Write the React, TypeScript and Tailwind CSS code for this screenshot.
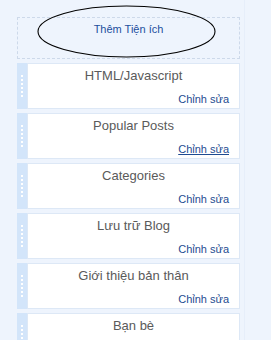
import React from "react";

const items = [
  { title: "HTML/Javascript", hover: false },
  { title: "Popular Posts", hover: true },
  { title: "Categories", hover: false },
  { title: "Lưu trữ Blog", hover: false },
  { title: "Giới thiệu bản thân", hover: false },
  { title: "Bạn bè", hover: false },
];

function Handle() {
  return (
    <div className="w-[10px] shrink-0 bg-[#d3e5fa] flex flex-col items-center justify-center gap-[2px]">
      {[0, 1, 2, 3, 4, 5].map((i) => (
        <div key={i} className="w-[2px] h-[2px] bg-white" />
      ))}
    </div>
  );
}

export default function App() {
  return (
    <div
      className="w-[271px] h-[340px] overflow-hidden bg-[#eef4fd] relative"
      style={{ fontFamily: '"Liberation Sans", Arial, sans-serif' }}
    >
      <div className="w-[245px] h-full border-r border-[#e6eefa] pl-[17px] pt-[17px]">
        <div className="w-[223px] h-[42px] border border-dashed border-[#cdd9ea] flex items-start justify-center pt-[5px]">
          <span className="text-[11px] leading-[13px] text-[#1d4f9d]">Thêm Tiện ích</span>
        </div>
        <div className="flex flex-col gap-[4px] mt-[4px]">
          {items.map((it) => (
            <div key={it.title} className="w-[223px] h-[46px] flex shrink-0">
              <Handle />
              <div className="flex-1 bg-white border border-[#dde8f6] flex flex-col">
                <div className="text-[13px] leading-[16px] text-[#5a5a5a] text-center mt-[4px]">
                  {it.title}
                </div>
                <div className="text-right pr-[10px] mt-[2px]">
                  <span
                    className={
                      "text-[11px] leading-[14px] text-[#1e4b91] " + (it.hover ? "underline" : "")
                    }
                  >
                    Chỉnh sửa
                  </span>
                </div>
              </div>
            </div>
          ))}
        </div>
      </div>
      <svg
        className="absolute left-0 top-0 pointer-events-none"
        width="271"
        height="340"
        viewBox="0 0 271 340"
      >
        <ellipse cx="126.5" cy="31.5" rx="88.5" ry="25.5" fill="none" stroke="#000" strokeWidth="1.1" />
      </svg>
    </div>
  );
}
